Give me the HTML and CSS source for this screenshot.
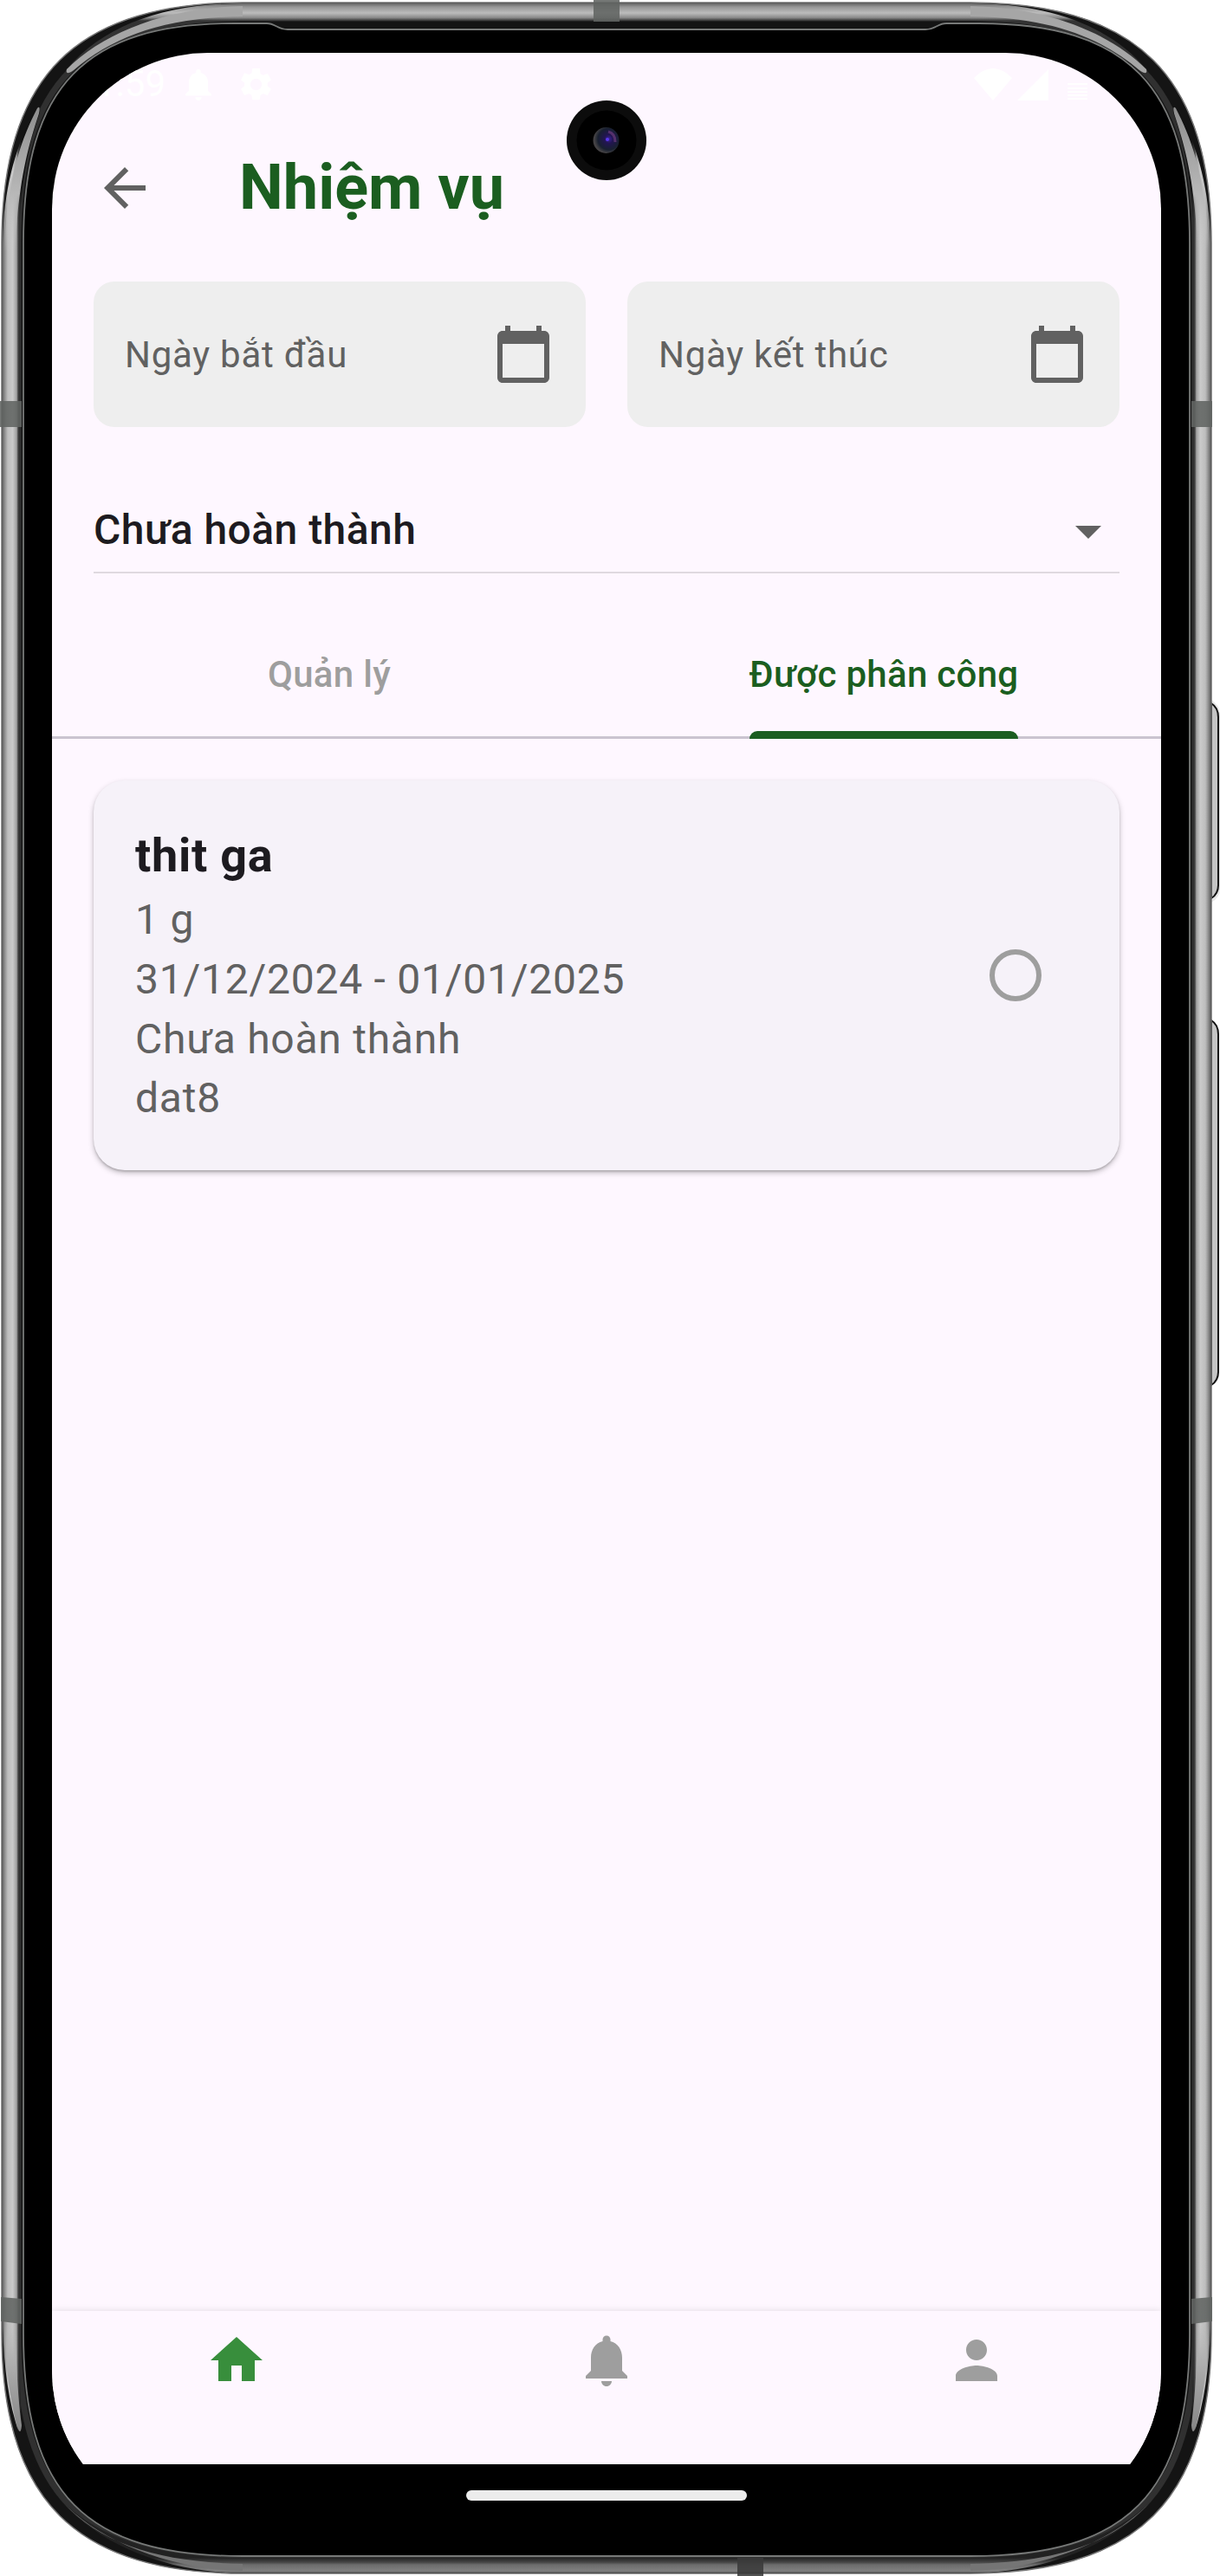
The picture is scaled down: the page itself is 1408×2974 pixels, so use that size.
FILE: index.html
```html
<!DOCTYPE html>
<html lang="vi">
<head>
<meta charset="utf-8">
<title>Nhiệm vụ</title>
<link rel="stylesheet" href="styles.css">
</head>
<body>
<div class="device">
  <svg class="device-frame" viewBox="0 0 1408 2974" aria-hidden="true">
    <defs>
      <linearGradient id="top" x1="0" x2="0" y1="4" y2="24" gradientUnits="userSpaceOnUse">
        <stop offset="0" stop-color="#666"/><stop offset=".2" stop-color="#969696"/><stop offset=".55" stop-color="#bcbcbc"/><stop offset=".82" stop-color="#8a8a8a"/><stop offset="1" stop-color="#333"/>
      </linearGradient>
      <linearGradient id="bottom" x1="0" x2="0" y1="2953" y2="2972" gradientUnits="userSpaceOnUse">
        <stop offset="0" stop-color="#222"/><stop offset=".28" stop-color="#484848"/><stop offset=".42" stop-color="#6c6c6c"/><stop offset=".8" stop-color="#808080"/><stop offset="1" stop-color="#333"/>
      </linearGradient>
      <linearGradient id="side" x1="2" x2="25" y1="0" y2="0" gradientUnits="userSpaceOnUse">
        <stop offset="0" stop-color="#555"/><stop offset=".14" stop-color="#8b8b8b"/><stop offset=".3" stop-color="#bdbdbd"/><stop offset=".55" stop-color="#cacaca"/><stop offset=".75" stop-color="#a0a0a0"/><stop offset=".82" stop-color="#444"/><stop offset="1" stop-color="#111"/>
      </linearGradient>
      <linearGradient id="taper-top" x1="0" x2="0" y1="124" y2="290" gradientUnits="userSpaceOnUse">
        <stop offset="0" stop-color="#8e8e8e"/><stop offset=".6" stop-color="#b8b8b8"/><stop offset="1" stop-color="#c8c8c8" stop-opacity="0"/>
      </linearGradient>
      <linearGradient id="taper-bottom" x1="0" x2="0" y1="2670" y2="2808" gradientUnits="userSpaceOnUse">
        <stop offset="0" stop-color="#bbb" stop-opacity="0"/><stop offset=".4" stop-color="#b0b0b0"/><stop offset="1" stop-color="#858585"/>
      </linearGradient>
      <radialGradient id="lens" cx=".6" cy=".45" r=".55">
        <stop offset="0" stop-color="#3a249a"/><stop offset=".3" stop-color="#221552"/><stop offset=".75" stop-color="#182030"/><stop offset="1" stop-color="#444244"/>
      </radialGradient>
      <g id="side-metal">
        <path fill="url(#side)" d="M3 280C4 215 20 162 43 124Q47 121 46 130C34 164 23 210 22 280V2670C22 2730 24 2770 25 2800Q24 2813 20 2803C8 2765 3 2720 3 2670Z"/>
        <path fill="url(#taper-top)" d="M5 290C7 215 22 165 43 125Q47 121 45 131C32 170 20 215 18 290Z"/>
        <path fill="url(#taper-bottom)" d="M5 2670C5 2720 10 2765 20 2802Q24 2813 25 2800C21 2770 18 2730 18 2670Z"/>
      </g>
    </defs>
    <path fill="#e8e8e8" d="M1398 808Q1408 814 1408 826V1026Q1408 1036 1398 1042Z"/>
    <path fill="#c5c5c5" stroke="#111" stroke-width="2" d="M1398 812Q1406 817 1406 828V1022Q1406 1032 1398 1037Z"/>
    <path fill="#c5c5c5" stroke="#111" stroke-width="2" d="M1398 1178Q1406 1183 1406 1194V1584Q1406 1594 1398 1599Z"/>
    <path fill="#141414" stroke="#777" stroke-width="1.5" d="M2 280C2 88 88 3 280 3H1120C1312 3 1398 88 1398 280V2694C1398 2886 1312 2971 1120 2971H280C88 2971 2 2886 2 2694Z"/>
    <path fill="none" stroke="#303030" stroke-width="7" d="M21 280C21 95 96 21 280 21H1120C1304 21 1379 95 1379 280V2694C1379 2879 1304 2955 1120 2955H280C96 2955 21 2879 21 2694Z"/>
    <path fill="url(#top)" d="M280 4H1120C1210 4 1280 29 1323 80Q1325 88 1315 81C1260 38 1200 24 1120 24H280C200 24 140 38 85 81Q75 88 77 80C120 29 190 4 280 4Z"/>
    <path fill="#a6a6a6" d="M280 7C190 9 119 38 77 80Q75 88 85 81C131 42 190 20 280 19Z"/>
    <path fill="#a6a6a6" d="M1120 7C1210 9 1281 38 1323 80Q1325 88 1315 81C1269 42 1210 20 1120 19Z"/>
    <path fill="url(#bottom)" d="M280 2971H1120C1210 2969 1285 2938 1328 2888C1280 2935 1205 2953 1120 2953H280C195 2953 120 2935 72 2888C115 2938 190 2969 280 2971Z"/>
    <path fill="#757575" d="M280 2968C190 2966 110 2930 72 2888C118 2940 190 2958 280 2960ZM1120 2968C1210 2966 1290 2930 1328 2888C1282 2940 1210 2958 1120 2960Z"/>
    <use href="#side-metal"/>
    <use href="#side-metal" transform="matrix(-1 0 0 1 1400 0)"/>
    <path fill="#000" stroke="#777978" stroke-width="1.8" d="M27 280C27 99 99 27 270 27H308C318 27 320 34 332 34H1068C1080 34 1082 27 1092 27H1130C1301 27 1373 99 1373 280V2694C1373 2879 1301 2951 1120 2951H280C99 2951 27 2879 27 2694Z"/>
    <g fill="#616462" fill-opacity=".88">
      <path d="M685 0h30v25h-30zM0 463h25v30H0zM1375 463h24v30h-24zM1 2652l24 2v29l-24-3zM1375 2654l24-2v28l-24 3z"/>
      <path fill="#3a3a3a" d="M851 2953h30v21h-30z"/>
    </g>
  </svg>

  <main class="display">
    <header class="status-bar">
      <span class="clock">1:59</span>
      <svg class="status-bell" viewBox="4 2 16 20" aria-hidden="true"><path d="M12 22c1.1 0 2-.9 2-2h-4c0 1.1.9 2 2 2zm6-6v-5c0-3.1-1.6-5.6-4.5-6.300V4a1.500 1.500 0 0 0-3 0v.7C7.600 5.400 6 7.900 6 11v5l-2 2v1h16v-1z"/></svg>
      <svg class="status-gear" viewBox="2 2 20 20" aria-hidden="true"><path d="M19.140 12.940c.04-.3.06-.61.06-.94 0-.32-.02-.64-.07-.94l2.030-1.580a.49.49 0 0 0 .12-.61l-1.920-3.320a.49.49 0 0 0-.59-.22l-2.390.96c-.5-.38-1.030-.7-1.620-.94l-.36-2.540A.48.480 0 0 0 13.920 2h-3.840c-.24 0-.43.17-.47.41l-.36 2.540c-.59.24-1.130.57-1.620.94l-2.390-.96a.48.480 0 0 0-.59.22L2.740 8.870c-.12.21-.08.470.12.610l2.030 1.580c-.05.3-.09.63-.09.94s.02.64.07.94l-2.030 1.580a.49.49 0 0 0-.12.61l1.920 3.320c.12.22.37.29.59.22l2.390-.96c.5.38 1.030.7 1.620.94l.36 2.540c.05.24.24.41.48.41h3.840c.24 0 .44-.17.47-.41l.36-2.540c.59-.24 1.130-.56 1.620-.94l2.390.96c.22.08.47 0 .59-.22l1.920-3.320a.48.480 0 0 0-.12-.61zM12 15.600a3.600 3.600 0 1 1 0-7.200 3.600 3.600 0 0 1 0 7.200z"/></svg>
      <svg class="status-signal" viewBox="0 0 132 37" aria-hidden="true"><path d="M0 11Q22-11 44 11L22 37zM50 37L86 1v36zM108 17h23v2h-23zM108 22h23v2h-23zM108 26h23v2h-23zM108 30h23v2h-23zM108 34h23v2h-23z"/></svg>
    </header>

    <div class="app-bar">
      <svg class="icon" viewBox="0 0 24 24" aria-hidden="true"><path d="M20 11H7.830l5.590-5.590L12 4l-8 8 8 8 1.410-1.410L7.830 13H20v-2z"/></svg>
      <h1 class="title">Nhiệm vụ</h1>
    </div>

    <div class="dates">
      <div class="date-field">
        <span class="date-label">Ngày bắt đầu</span>
        <svg class="icon" viewBox="0 0 24 24" aria-hidden="true"><path d="M20 3h-1V1h-2v2H7V1H5v2H4c-1.100 0-2 .9-2 2v16c0 1.100.9 2 2 2h16c1.100 0 2-.9 2-2V5c0-1.100-.9-2-2-2zm0 18H4V8h16v13z"/></svg>
      </div>
      <div class="date-field">
        <span class="date-label">Ngày kết thúc</span>
        <svg class="icon" viewBox="0 0 24 24" aria-hidden="true"><path d="M20 3h-1V1h-2v2H7V1H5v2H4c-1.100 0-2 .9-2 2v16c0 1.100.9 2 2 2h16c1.100 0 2-.9 2-2V5c0-1.100-.9-2-2-2zm0 18H4V8h16v13z"/></svg>
      </div>
    </div>

    <div class="status-select">
      <span class="select-value">Chưa hoàn thành</span>
      <svg class="icon" viewBox="0 0 24 24" aria-hidden="true"><path d="M7 10l5 5 5-5z"/></svg>
    </div>

    <nav class="tabs">
      <div class="tab"><span class="tab-label">Quản lý</span></div>
      <div class="tab tab-active"><span class="tab-label">Được phân công</span></div>
    </nav>

    <section class="tasks">
      <article class="card">
        <div class="card-text">
          <h2 class="card-title">thit ga</h2>
          <p>1 g</p>
          <p>31/12/2024 - 01/01/2025</p>
          <p>Chưa hoàn thành</p>
          <p>dat8</p>
        </div>
        <span class="radio"></span>
      </article>
    </section>

    <nav class="bottom-nav">
      <div class="nav-item nav-active"><svg class="icon" viewBox="0 0 24 24" aria-hidden="true"><path d="M10 20v-6h4v6h5v-8h3L12 3 2 12h3v8z"/></svg></div>
      <div class="nav-item"><svg class="icon" viewBox="0 0 24 24" aria-hidden="true"><path d="M12 22c1.100 0 2-.9 2-2h-4c0 1.100.89 2 2 2zm6-6v-5c0-3.070-1.640-5.640-4.500-6.320V4c0-.83-.67-1.500-1.500-1.500s-1.500.67-1.500 1.500v.68C7.630 5.360 6 7.920 6 11v5l-2 2v1h16v-1l-2-2z"/></svg></div>
      <div class="nav-item"><svg class="icon" viewBox="0 0 24 24" aria-hidden="true"><path d="M12 12c2.210 0 4-1.790 4-4s-1.790-4-4-4-4 1.790-4 4 1.790 4 4 4zm0 2c-2.670 0-8 1.340-8 4v2h16v-2c0-2.660-5.330-4-8-4z"/></svg></div>
    </nav>

    <footer class="gesture-bar"><span class="gesture-handle"></span></footer>
  </main>

  <svg class="camera" viewBox="0 0 92 92" aria-hidden="true">
    <circle cx="46" cy="46" r="46" fill="#0c0c0c"/><circle cx="46" cy="46" r="34.500" fill="#000"/>
    <circle cx="45.500" cy="46" r="15" fill="url(#lens)"/><circle cx="47" cy="45" r="2" fill="#5a38ee"/>
    <path d="M48 36Q56 38 56 48" fill="none" stroke="#55306c" stroke-width="3"/>
  </svg>
</div>
</body>
</html>
```
FILE: styles.css
```css
* { box-sizing: border-box; }

body {
  margin: 0;
  background: #fff;
  font-family: Roboto, sans-serif;
  color: #1d1b20;
}

h1, h2, p { margin: 0; }

.device {
  position: relative;
  width: 1408px;
  height: 2974px;
  padding: 61px 68px 57px 60px;
  overflow: hidden;
}

.device-frame {
  position: absolute;
  inset: 0;
  width: 1408px;
  height: 2974px;
}

.display {
  position: relative;
  display: flex;
  flex-direction: column;
  width: 1280px;
  height: 2856px;
  border-radius: 180px;
  overflow: hidden;
  background: linear-gradient(#fef7ff 2784px, #000 2784px);
}

.camera {
  position: absolute;
  left: 654px;
  top: 116px;
  width: 92px;
  height: 92px;
}

.icon {
  flex: none;
  width: 72px;
  height: 72px;
  fill: #616161;
}

.status-bar {
  display: flex;
  align-items: center;
  height: 72px;
  padding: 0 84px 0 50px;
  color: #fff;
  fill: #fff;
}

.clock { width: 104px; font-size: 42px; line-height: 50px; }
.status-bell { width: 30px; height: 37px; }
.status-gear { width: 37px; height: 37px; margin-left: 33px; }
.status-signal { width: 132px; height: 37px; margin-left: auto; }

.app-bar {
  display: flex;
  align-items: center;
  gap: 96px;
  height: 168px;
  padding: 0 48px;
}

.title {
  font-size: 72px;
  font-weight: 700;
  line-height: 92px;
  color: #1b5e20;
}

.dates {
  display: flex;
  gap: 48px;
  padding: 24px 48px 0;
}

.date-field {
  flex: 1;
  display: flex;
  align-items: center;
  justify-content: space-between;
  height: 168px;
  padding: 0 36px;
  border-radius: 24px;
  background: #eee;
}

.date-label {
  padding-top: 2px;
  color: #616161;
  font-size: 42px;
  line-height: 60px;
  letter-spacing: 0.75px;
}

.status-select {
  display: flex;
  align-items: center;
  justify-content: space-between;
  height: 97px;
  margin: 72px 48px 0;
  border-bottom: 2px solid #dfd9df;
}

.select-value {
  padding-bottom: 2px;
  font-size: 48px;
  font-weight: 500;
  line-height: 68px;
  letter-spacing: 0.45px;
}

.tabs {
  display: flex;
  height: 144px;
  margin-top: 47px;
  background: linear-gradient(#cac4d0, #cac4d0) bottom / 100% 3px no-repeat;
}

.tab {
  flex: 1;
  display: flex;
  justify-content: center;
}

.tab-label {
  display: flex;
  flex-direction: column;
  justify-content: space-between;
  height: 144px;
  font-size: 42px;
  font-weight: 500;
  line-height: 139px;
  letter-spacing: 0.3px;
  color: #9e9e9e;
}

.tab-active .tab-label { color: #1b5e20; }

.tab-active .tab-label::after {
  content: "";
  height: 9px;
  margin-top: -4px;
  border-radius: 9px 9px 0 0;
  background: #1b5e20;
}

.tasks {
  flex: 1;
  padding: 48px;
}

.card {
  display: flex;
  align-items: center;
  justify-content: space-between;
  height: 450px;
  padding: 0 90px 0 48px;
  border-radius: 36px;
  background: #f6f2f9;
  box-shadow: 0 3px 6px rgba(0, 0, 0, 0.25), 0 2px 2px rgba(0, 0, 0, 0.12);
}

.card-text {
  padding-bottom: 1px;
  font-size: 48px;
  line-height: 68.6px;
  letter-spacing: 0.75px;
  color: #616161;
}

.card-title {
  font-size: 54px;
  font-weight: 700;
  line-height: 80px;
  letter-spacing: 0.75px;
  color: #1d1b20;
}

.radio {
  width: 60px;
  height: 60px;
  border: 6px solid #9e9e9e;
  border-radius: 50%;
}

.bottom-nav {
  display: flex;
  height: 177px;
  background: #fef7ff;
  box-shadow: 0 0 8px rgba(0, 0, 0, 0.12);
}

.nav-item {
  flex: 1;
  display: flex;
  justify-content: center;
  padding-top: 21px;
}

.nav-item .icon { fill: #9e9e9e; }
.nav-active .icon { fill: #388e3c; }

.gesture-bar {
  display: flex;
  justify-content: center;
  height: 72px;
  padding-top: 30px;
}

.gesture-handle {
  width: 324px;
  height: 12px;
  border-radius: 6px;
  background: #ececec;
}
```
